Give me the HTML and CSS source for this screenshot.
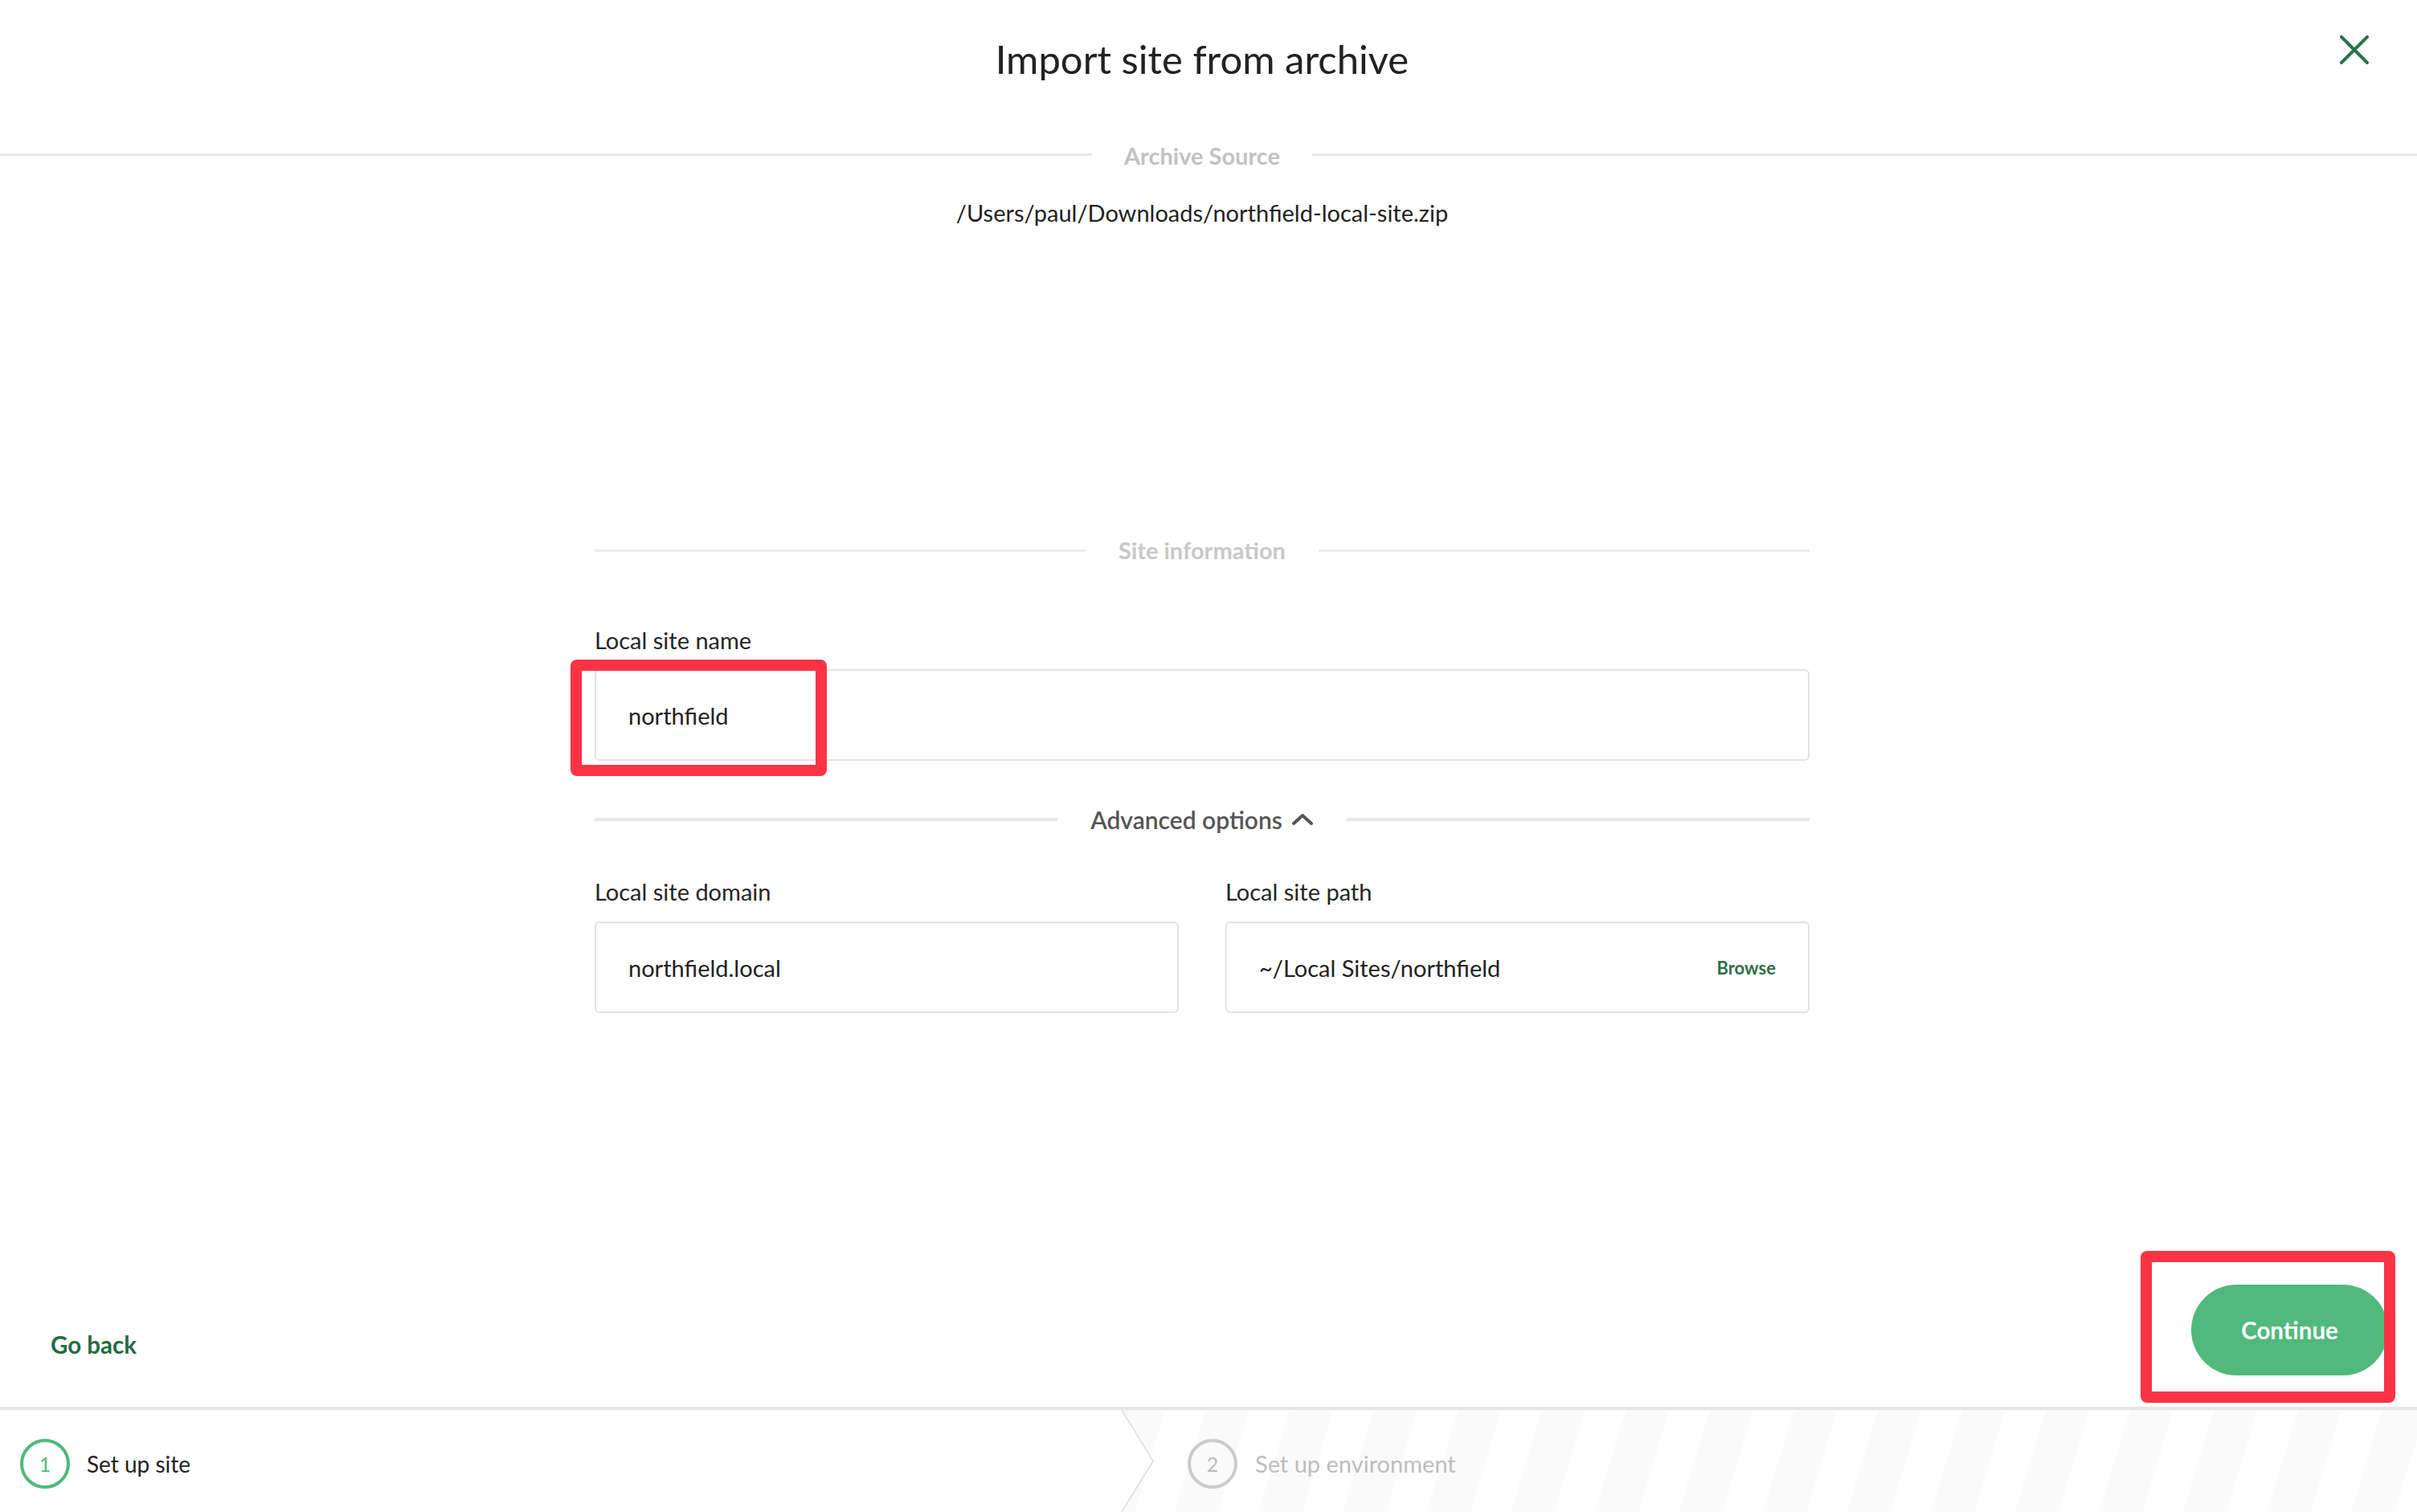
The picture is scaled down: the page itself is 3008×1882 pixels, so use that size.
FILE: index.html
```html
<!DOCTYPE html>
<html lang="en">
<head>
    <meta charset="UTF-8">
    <meta name="viewport" content="width=device-width, initial-scale=1.0">
    <title>Import site from archive</title>
    <link rel="stylesheet" href="styles.css">
</head>
<body>
    <div id="app">
        <header class="top">
            <h1>Import site from archive</h1>
            <button class="close" aria-label="Close">
                <svg width="36" height="36" viewBox="0 0 36 36">
                    <path d="M2 2 L34 34 M34 2 L2 34" stroke="#2a7349" stroke-width="4" stroke-linecap="round" fill="none"/>
                </svg>
            </button>
        </header>

        <div class="page">
            <span class="source-label">Archive Source</span>
            <p class="source-path">/Users/paul/Downloads/northfield-local-site.zip</p>

            <main class="form">
                <div class="divider light"><span>Site information</span></div>

                <label class="label" for="siteName">Local site name</label>
                <div class="field">
                    <input type="text" id="siteName" value="northfield">
                    <span class="marker"></span>
                </div>

                <div class="divider dark">
                    <span>Advanced options
                        <svg width="28" height="16" viewBox="0 0 28 16">
                            <path d="M3 13 L14 3 L25 13" stroke="#555" stroke-width="4" stroke-linecap="round" stroke-linejoin="round" fill="none"/>
                        </svg>
                    </span>
                </div>

                <div class="cols">
                    <div>
                        <label class="label" for="siteDomain">Local site domain</label>
                        <div class="field">
                            <input type="text" id="siteDomain" value="northfield.local">
                        </div>
                    </div>
                    <div>
                        <label class="label" for="sitePath">Local site path</label>
                        <div class="field">
                            <input type="text" id="sitePath" value="~/Local Sites/northfield">
                            <button class="browse">Browse</button>
                        </div>
                    </div>
                </div>
            </main>
        </div>

        <div class="actions">
            <a class="back" href="#">Go back</a>
            <div class="continue-wrap">
                <button class="continue">Continue</button>
                <span class="marker"></span>
            </div>
        </div>

        <footer class="steps">
            <div class="step done">
                <span class="num">1</span>
                <span>Set up site</span>
            </div>
            <div class="step todo">
                <svg class="arrow" width="40" height="127" viewBox="0 0 40 127" preserveAspectRatio="none">
                    <path d="M0 0 L39 63.5 L0 127 Z" fill="#fff"/>
                    <polyline points="0,0 39,63.5 0,127" stroke="#e3e3e3" stroke-width="2" fill="none"/>
                </svg>
                <span class="num">2</span>
                <span>Set up environment</span>
            </div>
        </footer>
    </div>
</body>
</html>
```

FILE: styles.css
```css
/* Base */
body {
    margin: 0;
    font-family: Lato, "Liberation Sans", sans-serif;
    color: #262626;
    background-color: #fff;
}

#app {
    width: 3008px;
    height: 1882px;
    display: flex;
    flex-direction: column;
    overflow: hidden;
}

/* Header */
.top {
    display: grid;
    grid-template-columns: 1fr auto 1fr;
    align-items: start;
    box-sizing: border-box;
    height: 194px;
    padding: 45px 16px 0 0;
    border-bottom: 3px solid #e8e8e8;
}

.top h1 {
    grid-column: 2;
    margin: 0;
    font-size: 49px;
    font-weight: 400;
    line-height: 57px;
    color: #222;
}

.close {
    grid-column: 3;
    justify-self: end;
    margin: -1px 44px 0 0;
    padding: 0;
    border: none;
    background: none;
    width: 36px;
    height: 36px;
    cursor: pointer;
}

.close svg {
    display: block;
}

/* Page body */
.page {
    flex: 1;
    padding-right: 16px;
    display: flex;
    flex-direction: column;
    align-items: center;
}

.source-label {
    margin-top: -18px;
    padding: 0 40px;
    background-color: #fff;
    font-size: 29px;
    font-weight: 700;
    line-height: 36px;
    color: #c2c2c2;
}

.source-path {
    margin: 35px 0 0;
    font-size: 29px;
    line-height: 36px;
    color: #222;
}

.form {
    width: 1512px;
    margin-top: 384px;
}

.divider {
    display: flex;
    align-items: center;
    font-size: 29px;
    line-height: 36px;
}

.divider::before,
.divider::after {
    content: "";
    flex: 1;
}

.divider span {
    display: flex;
    align-items: center;
    gap: 11px;
    padding: 0 41px;
}

.divider.light {
    color: #c8c8c8;
    font-weight: 700;
}

.divider.light::before,
.divider.light::after {
    height: 3px;
    background-color: #ececec;
}

.divider.dark {
    margin-top: 55px;
    color: #555;
    font-size: 30px;
    font-weight: 600;
}

.divider.dark::before,
.divider.dark::after {
    height: 4px;
    background-color: #e6e6e6;
}

.label {
    display: block;
    margin-top: 76px;
    font-size: 29px;
    line-height: 36px;
    color: #262626;
}

.field {
    position: relative;
    display: flex;
    align-items: center;
    box-sizing: border-box;
    height: 114px;
    margin-top: 18px;
    padding: 0 40px;
    border: 2px solid #e3e3e3;
    border-radius: 6px;
}

.field input {
    flex: 1;
    min-width: 0;
    padding: 0;
    border: none;
    outline: none;
    font-family: inherit;
    font-size: 29px;
    color: #222;
    background: transparent;
}

.browse {
    padding: 0;
    border: none;
    background: none;
    font-family: inherit;
    font-size: 22px;
    font-weight: 700;
    color: #2e6e46;
    cursor: pointer;
}

.cols {
    display: grid;
    grid-template-columns: 1fr 1fr;
    column-gap: 58px;
}

.cols .label {
    margin-top: 54px;
}

.cols .field {
    margin-top: 19px;
}

/* Red annotation boxes */
.marker {
    position: absolute;
    box-sizing: border-box;
    border: 14px solid #fa3444;
    border-radius: 8px;
    pointer-events: none;
}

.field .marker {
    left: -32px;
    top: -14px;
    width: 319px;
    height: 145px;
}

/* Bottom actions */
.actions {
    display: flex;
    justify-content: space-between;
    align-items: flex-start;
    padding: 0 36px 39px 63px;
}

.back {
    margin-top: 57px;
    font-size: 29.5px;
    line-height: 36px;
    font-weight: 700;
    color: #256b41;
    text-decoration: none;
}

.continue-wrap {
    position: relative;
}

.continue {
    display: block;
    width: 245px;
    height: 113px;
    border: none;
    border-radius: 57px;
    background-color: #51b97b;
    color: #fff;
    font-family: inherit;
    font-size: 29.5px;
    font-weight: 700;
    cursor: pointer;
}

.continue-wrap .marker {
    left: -63px;
    top: -42px;
    width: 317px;
    height: 189px;
}

/* Steps footer */
.steps {
    display: flex;
    box-sizing: border-box;
    height: 131px;
    border-top: 4px solid #e6e6e6;
    font-size: 28px;
}

.step {
    display: flex;
    align-items: center;
}

.step .num {
    display: flex;
    align-items: center;
    justify-content: center;
    box-sizing: border-box;
    width: 62px;
    height: 62px;
    margin-top: 6px;
    border-radius: 50%;
    border: 4px solid;
    font-size: 25px;
}

.step .num + span {
    margin-top: 6px;
}

.step.done {
    width: 1396px;
    padding-left: 25px;
    box-sizing: border-box;
    gap: 21px;
    color: #222;
}

.step.done .num {
    border-color: #51b97b;
    color: #51b97b;
}

.step.todo {
    flex: 1;
    gap: 22px;
    font-size: 29px;
    color: #bdbdbd;
    background: repeating-linear-gradient(107deg, #fafafa 0 52px, #fff 52px 100px);
}

.step.todo .arrow {
    align-self: stretch;
    height: 127px;
    margin-right: 20px;
}

.step.todo .num {
    border-color: #cbcbcb;
    color: #bdbdbd;
}
```
